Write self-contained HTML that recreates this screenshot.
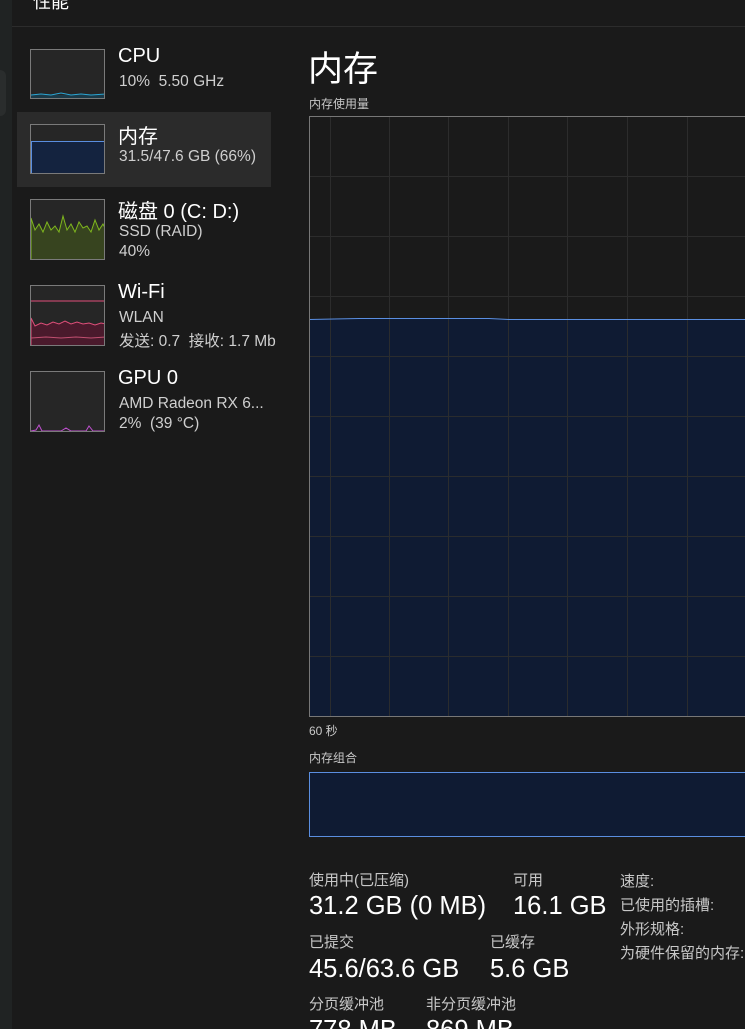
<!DOCTYPE html>
<html><head><meta charset="utf-8"><style>
*{margin:0;padding:0;box-sizing:border-box}
html,body{width:745px;height:1029px;overflow:hidden}
body{background:#1a1a1a;font-family:"Liberation Sans","Noto Sans CJK SC",sans-serif;color:#fff;position:relative}
.a{position:absolute;white-space:nowrap}
.strip{left:0;top:0;width:12px;height:1029px;background:#202323}
.grey{color:#c8c8c8}
.thumb{position:absolute;left:30px;width:75px;border:1px solid #7a7a7a;background:#262626;overflow:hidden}
.t{font-size:20px;left:118px}
.s{font-size:15.5px;left:119px;color:#cfcfcf}
.l{font-size:15px}
.b{font-size:25.5px}
</style></head><body>
<div class="a strip"></div>
<div class="a" style="left:0;top:70px;width:6px;height:46px;background:#2a2d2d;border-radius:0 6px 6px 0"></div>
<div class="a" style="left:33px;top:-12px;font-size:18px">性能</div>
<div class="a" style="left:12px;top:26px;width:733px;height:1px;background:#2c2c2c"></div>

<div class="a" style="left:17px;top:112px;width:254px;height:75px;background:#2b2b2b"></div>

<div class="thumb" style="top:49px;height:50px"><svg width="75" height="50"><rect x="0" y="45" width="75" height="5" fill="#1b3a48"/><polyline points="0,45 10,44 20,45 30,43 40,45 50,44 60,45 75,44" fill="none" stroke="#2aa7d6" stroke-width="1"/></svg></div>
<div class="a t" style="top:45px">CPU</div>
<div class="a s" style="top:73px">10%&nbsp; 5.50 GHz</div>

<div class="thumb" style="top:124px;height:50px"><div style="position:absolute;left:0;top:16px;width:75px;height:34px;background:#14233f;border-top:1px solid #5a8ee0;border-left:1px solid #5a8ee0"></div></div>
<div class="a t" style="top:120px">内存</div>
<div class="a s" style="top:148px">31.5/47.6 GB (66%)</div>

<div class="thumb" style="top:199px;height:61px"><svg width="75" height="61"><polygon points="0,61 0,18 4,30 8,24 12,32 16,22 20,30 24,26 28,32 32,16 36,30 40,24 44,32 48,22 52,28 56,26 60,32 64,20 68,30 72,24 75,30 75,61" fill="#37441f" stroke="#7fb71e" stroke-width="1"/></svg></div>
<div class="a t" style="top:195px">磁盘 0 (C: D:)</div>
<div class="a s" style="top:223px">SSD (RAID)</div>
<div class="a s" style="top:243px">40%</div>

<div class="thumb" style="top:285px;height:61px"><svg width="75" height="61"><line x1="0" y1="15" x2="75" y2="15" stroke="#e04f7a"/><polygon points="0,61 0,32 4,40 10,37 16,39 22,36 28,38 34,35 40,38 46,36 52,38 58,37 64,39 70,37 75,38 75,61" fill="#4a1a2c" stroke="#e04f7a" stroke-width="1"/><polyline points="0,52 15,51 30,52 45,51 60,52 75,51" fill="none" stroke="#c04f70"/></svg></div>
<div class="a t" style="top:281px">Wi-Fi</div>
<div class="a s" style="top:309px">WLAN</div>
<div class="a s" style="top:329px">发送: 0.7&nbsp; 接收: 1.7 Mb</div>

<div class="thumb" style="top:371px;height:61px"><svg width="75" height="61"><polyline points="0,59 5,58 8,53 11,59 30,59 35,56 40,59 55,59 58,54 62,59 75,59" fill="none" stroke="#c050d0"/></svg></div>
<div class="a t" style="top:367px">GPU 0</div>
<div class="a s" style="top:395px">AMD Radeon RX 6...</div>
<div class="a s" style="top:415px">2%&nbsp; (39 °C)</div>

<div class="a" style="left:308px;top:41px;font-size:35px">内存</div>
<div class="a grey" style="left:309px;top:95px;font-size:12px">内存使用量</div>

<svg class="a" style="left:309px;top:116px" width="436" height="601">
<rect x="0" y="203" width="436" height="398" fill="#0f1b33"/>
<g stroke="#2e2e2e" stroke-width="1" opacity="0.9">
<line x1="21.5" y1="0" x2="21.5" y2="601"/><line x1="80.5" y1="0" x2="80.5" y2="601"/><line x1="139.5" y1="0" x2="139.5" y2="601"/><line x1="199.5" y1="0" x2="199.5" y2="601"/><line x1="258.5" y1="0" x2="258.5" y2="601"/><line x1="318.5" y1="0" x2="318.5" y2="601"/><line x1="378.5" y1="0" x2="378.5" y2="601"/>
<line x1="0" y1="60.5" x2="436" y2="60.5"/><line x1="0" y1="120.5" x2="436" y2="120.5"/><line x1="0" y1="180.5" x2="436" y2="180.5"/><line x1="0" y1="240.5" x2="436" y2="240.5"/><line x1="0" y1="300.5" x2="436" y2="300.5"/><line x1="0" y1="360.5" x2="436" y2="360.5"/><line x1="0" y1="420.5" x2="436" y2="420.5"/><line x1="0" y1="480.5" x2="436" y2="480.5"/><line x1="0" y1="540.5" x2="436" y2="540.5"/>
</g>
<polyline points="0,203.5 50,202.5 180,202.5 200,203.5 436,203.5" fill="none" stroke="#5a8ee0" stroke-width="1"/>
<path d="M436,0.5 H0.5 V600.5 H436" fill="none" stroke="#777" stroke-width="1"/>
</svg>
<div class="a grey" style="left:309px;top:722px;font-size:12px">60 秒</div>
<div class="a grey" style="left:309px;top:749px;font-size:12px">内存组合</div>
<div class="a" style="left:309px;top:772px;width:440px;height:65px;background:#0f1b33;border:1px solid #5a8ee0"></div>

<div class="a grey l" style="left:309px;top:869px">使用中(已压缩)</div>
<div class="a b" style="left:309px;top:892px">31.2 GB (0 MB)</div>
<div class="a grey l" style="left:513px;top:869px">可用</div>
<div class="a b" style="left:513px;top:892px">16.1 GB</div>
<div class="a grey l" style="left:309px;top:931px">已提交</div>
<div class="a b" style="left:309px;top:955px">45.6/63.6 GB</div>
<div class="a grey l" style="left:490px;top:931px">已缓存</div>
<div class="a b" style="left:490px;top:955px">5.6 GB</div>
<div class="a grey l" style="left:309px;top:993px">分页缓冲池</div>
<div class="a b" style="left:309px;top:1016px">778 MB</div>
<div class="a grey l" style="left:426px;top:993px">非分页缓冲池</div>
<div class="a b" style="left:426px;top:1016px">869 MB</div>
<div class="a grey l" style="left:620px;top:870px">速度:</div>
<div class="a grey l" style="left:620px;top:894px">已使用的插槽:</div>
<div class="a grey l" style="left:620px;top:918px">外形规格:</div>
<div class="a grey l" style="left:620px;top:942px">为硬件保留的内存:</div>
</body></html>
